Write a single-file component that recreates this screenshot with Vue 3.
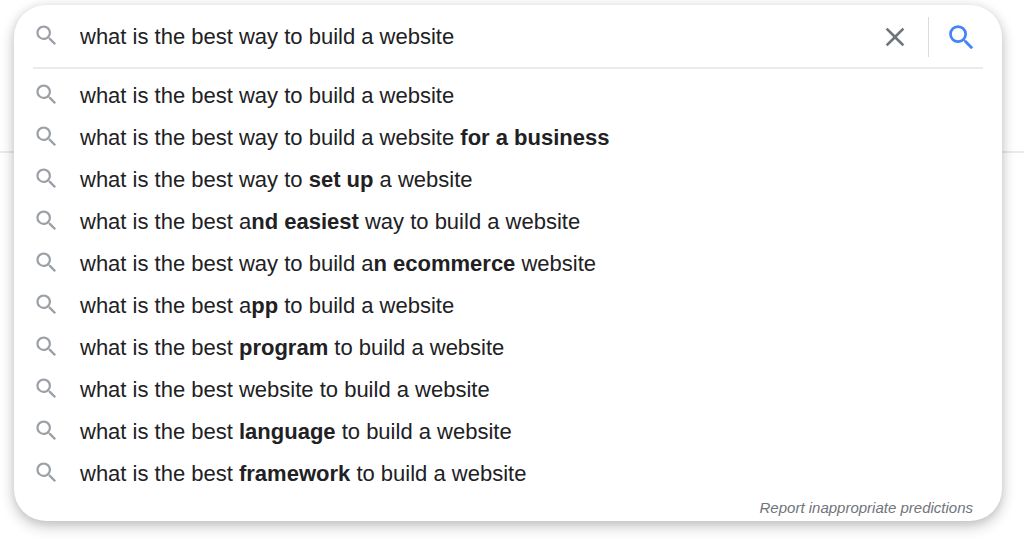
<template>
  <div class="page">
    <div class="page-line"></div>

    <form class="search-card" role="search" @submit.prevent>
      <div class="search-bar">
        <svg class="icon" viewBox="0 0 24 24"><path :d="searchPath" /></svg>
        <input
            v-model="query"
            class="search-input"
            type="text"
            aria-label="Search"
            autocomplete="off"
            spellcheck="false"
        >
        <button
            type="button"
            class="clear-button"
            aria-label="Clear"
            @click="query = ''"
        >
          <svg viewBox="0 0 24 24"><path :d="closePath" /></svg>
        </button>
        <button type="submit" class="submit-button" aria-label="Search">
          <svg viewBox="0 0 24 24"><path :d="searchPath" /></svg>
        </button>
      </div>

      <ul class="suggestions">
        <li v-for="(parts, index) in suggestions" :key="index">
          <button
              type="button"
              class="suggestion"
              @click="selectSuggestion(parts)"
          >
            <svg class="icon" viewBox="0 0 24 24"><path :d="searchPath" /></svg>
            <span class="suggestion-text">{{ parts[0] }}<b v-if="parts[1]">{{ parts[1] }}</b>{{ parts[2] }}</span>
          </button>
        </li>
      </ul>

      <div class="card-footer">
        <a href="#" class="report-link" @click.prevent>Report inappropriate predictions</a>
      </div>
    </form>
  </div>
</template>

<script setup>
import { ref } from 'vue'

const searchPath = 'M15.5 14h-.79l-.28-.27A6.471 6.471 0 0 0 16 9.5 6.5 6.5 0 1 0 9.5 16c1.61 0 3.09-.59 4.23-1.57l.27.28v.79l5 4.99L20.49 19l-4.99-5zm-6 0C7.01 14 5 11.99 5 9.5S7.01 5 9.5 5 14 7.01 14 9.5 11.99 14 9.5 14z'
const closePath = 'M19 6.41L17.59 5 12 10.59 6.41 5 5 6.41 10.59 12 5 17.59 6.41 19 12 13.41 17.59 19 19 17.59 13.41 12z'

const query = ref('what is the best way to build a website')

// [before, bold, after]
const suggestions = [
  ['what is the best way to build a website', '', ''],
  ['what is the best way to build a website ', 'for a business', ''],
  ['what is the best way to ', 'set up', ' a website'],
  ['what is the best a', 'nd easiest', ' way to build a website'],
  ['what is the best way to build a', 'n ecommerce', ' website'],
  ['what is the best a', 'pp', ' to build a website'],
  ['what is the best ', 'program', ' to build a website'],
  ['what is the best website to build a website', '', ''],
  ['what is the best ', 'language', ' to build a website'],
  ['what is the best ', 'framework', ' to build a website'],
]

const selectSuggestion = (parts) => {
  query.value = parts.join('')
}
</script>

<style>
body {
  margin: 0;
  background: #fff;
}
</style>

<style scoped>
.page {
  position: relative;
  padding: 5px 22px 19px 14px;
  font-family: Arial, "Liberation Sans", sans-serif;
  color: #212124;
}

.page-line {
  position: absolute;
  top: 151px;
  left: 0;
  right: 0;
  height: 2px;
  background: #ebebeb;
}

.search-card {
  position: relative;
  background: #fff;
  border-radius: 32px;
  box-shadow: 0 5px 14px rgba(32, 33, 36, 0.28), 0 0 8px rgba(32, 33, 36, 0.06);
}

.search-bar {
  display: flex;
  align-items: center;
  height: 60px;
  margin: 0 19px;
  padding: 2px 5px 0 0;
  border-bottom: 2px solid #ebebeb;
}

button {
  border: 0;
  padding: 0;
  background: none;
  font: inherit;
  color: inherit;
  cursor: pointer;
}

svg {
  display: block;
  fill: currentColor;
}

.icon {
  flex: none;
  width: 27px;
  height: 27px;
  margin-bottom: 3px;
  color: #9aa0a6;
}

.search-input {
  flex: 1;
  min-width: 0;
  height: 40px;
  margin-left: 20px;
  padding: 0;
  border: 0;
  outline: 0;
  background: none;
  font: inherit;
  font-size: 22px;
  color: inherit;
}

.clear-button {
  flex: none;
  padding-right: 17px;
  color: #70757a;
}

.clear-button svg {
  width: 32px;
  height: 32px;
}

.submit-button {
  display: flex;
  align-items: center;
  flex: none;
  height: 40px;
  padding-left: 16px;
  border-left: 1px solid #dadce0;
  color: #4285f4;
}

.submit-button svg {
  width: 33px;
  height: 33px;
}

.suggestions {
  list-style: none;
  margin: 0;
  padding: 6px 0 0;
}

.suggestion {
  display: flex;
  align-items: center;
  width: 100%;
  height: 42px;
  padding: 0 19px;
  text-align: left;
  font-size: 22px;
}

.suggestion-text {
  margin-left: 20px;
  white-space: pre;
}

.card-footer {
  display: flex;
  justify-content: flex-end;
  padding: 4px 29px 4px;
}

.report-link {
  font-size: 15px;
  line-height: 18px;
  font-style: italic;
  color: #70757a;
  text-decoration: none;
}
</style>
